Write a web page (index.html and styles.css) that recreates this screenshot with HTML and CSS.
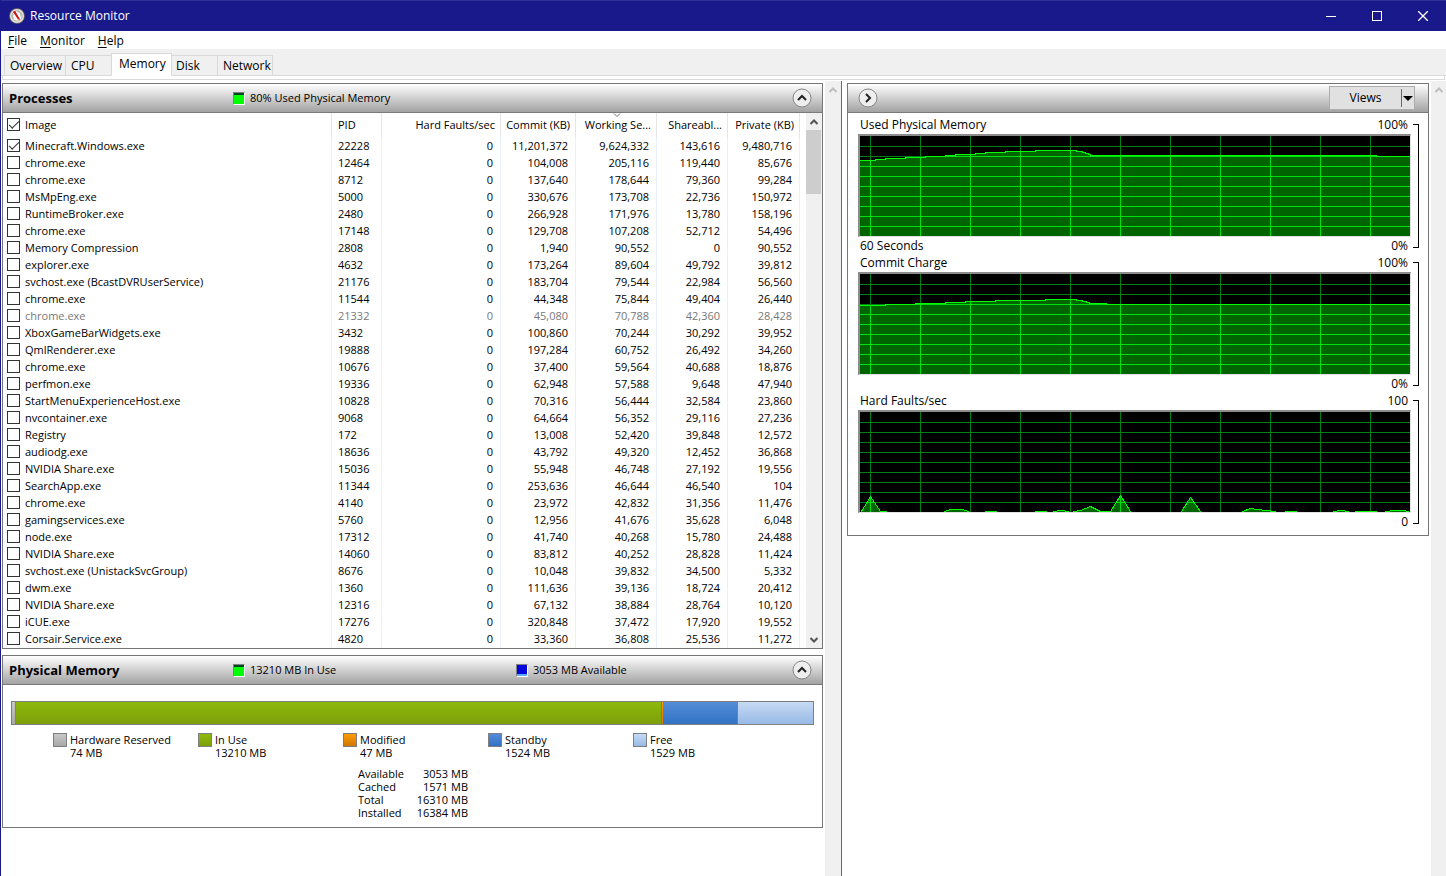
FILE: index.html
```html
<!DOCTYPE html>
<html lang="en">
<head>
<meta charset="utf-8">
<title>Resource Monitor</title>
<link rel="stylesheet" href="styles.css">
</head>
<body>
<header class="titlebar">
  <svg class="app-icon" viewBox="0 0 16 16" aria-hidden="true">
    <circle cx="8" cy="8" r="7.8" fill="#77736e"/>
    <circle cx="8" cy="8" r="7" fill="#ece6dc"/>
    <circle cx="8" cy="8" r="5.2" fill="#fff" stroke="#b5afa5" stroke-width="1"/>
    <path d="M4.4 10.5A4.5 4.5 0 0 1 4.2 6M8.5 3.4a4.6 4.6 0 0 1 3.4 5" fill="none" stroke="#8a8f8a" stroke-width=".8"/>
    <path d="M3.8 3.6 6.2 3 11.2 11.8 9 11.6Z" fill="#d01010"/>
  </svg>
  <h1 class="titlebar-text">Resource Monitor</h1>
  <button class="win-btn" aria-label="Minimize"><svg viewBox="0 0 10 10"><path d="M0 5.5H10"/></svg></button>
  <button class="win-btn" aria-label="Maximize"><svg viewBox="0 0 10 10"><path d="M.5 .5H9.5V9.5H.5Z"/></svg></button>
  <button class="win-btn" aria-label="Close"><svg viewBox="0 0 10 10" class="smooth"><path d="M0 0 10 10M10 0 0 10"/></svg></button>
</header>
<nav class="menubar">
  <button><u>F</u>ile</button>
  <button><u>M</u>onitor</button>
  <button><u>H</u>elp</button>
</nav>
<div class="tabs" role="tablist">
  <button class="tab tab-overview" role="tab">Overview</button>
  <button class="tab tab-cpu" role="tab">CPU</button>
  <button class="tab tab-memory selected" role="tab" aria-selected="true">Memory</button>
  <button class="tab tab-disk" role="tab">Disk</button>
  <button class="tab tab-network" role="tab">Network</button>
</div>
<div class="tab-edge"></div>
<main class="panes">
  <section class="pane pane-left">
    <div class="pane-content">
      <section class="panel">
        <header class="panel-head">
          <h2>Processes</h2>
          <span class="meter"><i class="meter-icon green"></i>80% Used Physical Memory</span>
          <button class="round" aria-label="Collapse"><svg viewBox="0 0 20 20"><circle cx="10" cy="10" r="9"/><path d="M6 12 10 8 14 12"/></svg></button>
        </header>
        <div class="list">
          <table class="processes">
            <colgroup><col><col class="c-pid"><col class="c-faults"><col class="c-commit"><col class="c-working"><col class="c-share"><col class="c-private"></colgroup>
            <thead>
              <tr>
                <th class="text"><label><input type="checkbox" checked>Image</label></th>
                <th class="text">PID</th>
                <th>Hard Faults/sec</th>
                <th>Commit (KB)</th>
                <th class="sorted">Working Se...<svg viewBox="0 0 8 5"><path d="M1 .5 4 3.5 7 .5"/></svg></th>
                <th>Shareabl...</th>
                <th>Private (KB)</th>
              </tr>
            </thead>
            <tbody id="rows"></tbody>
          </table>
          <div class="scrollbar">
            <button aria-label="Scroll up"><svg viewBox="0 0 8 6"><path d="M.5 5 4 1.5 7.5 5"/></svg></button>
            <div class="track"><div class="thumb"></div></div>
            <button aria-label="Scroll down"><svg viewBox="0 0 8 6"><path d="M.5 1 4 4.5 7.5 1"/></svg></button>
          </div>
        </div>
      </section>
      <section class="panel">
        <header class="panel-head">
          <h2>Physical Memory</h2>
          <span class="meter"><i class="meter-icon green"></i>13210 MB In Use</span>
          <span class="meter"><i class="meter-icon blue"></i>3053 MB Available</span>
          <button class="round" aria-label="Collapse"><svg viewBox="0 0 20 20"><circle cx="10" cy="10" r="9"/><path d="M6 12 10 8 14 12"/></svg></button>
        </header>
        <div class="memory">
          <div class="bar">
            <div class="reserved"></div>
            <div class="inuse" style="flex-grow:13210"></div>
            <div class="modified"></div>
            <div class="standby" style="flex-grow:1524"></div>
            <div class="free" style="flex-grow:1529"></div>
          </div>
          <ul class="legend">
            <li><i class="reserved"></i><span>Hardware Reserved<br>74 MB</span></li>
            <li><i class="inuse"></i><span>In Use<br>13210 MB</span></li>
            <li><i class="modified"></i><span>Modified<br>47 MB</span></li>
            <li><i class="standby"></i><span>Standby<br>1524 MB</span></li>
            <li><i class="free"></i><span>Free<br>1529 MB</span></li>
          </ul>
          <dl class="totals">
            <dt>Available</dt><dd>3053 MB</dd>
            <dt>Cached</dt><dd>1571 MB</dd>
            <dt>Total</dt><dd>16310 MB</dd>
            <dt>Installed</dt><dd>16384 MB</dd>
          </dl>
        </div>
      </section>
    </div>
    <div class="pane-scroll"><svg viewBox="0 0 8 6"><path d="M.5 5 4 1.5 7.5 5"/></svg></div>
  </section>
  <section class="pane pane-right">
    <div class="pane-content">
      <section class="panel">
        <header class="panel-head">
          <button class="round" aria-label="Hide graphs"><svg viewBox="0 0 20 20"><circle cx="10" cy="10" r="9"/><path d="M8 6 12 10 8 14"/></svg></button>
          <button class="views"><span>Views</span><i></i></button>
        </header>
        <div class="charts" id="charts"></div>
      </section>
    </div>
    <div class="pane-scroll"><svg viewBox="0 0 8 6"><path d="M.5 5 4 1.5 7.5 5"/></svg></div>
  </section>
</main>
<script src="app.js"></script>
</body>
</html>
```
FILE: styles.css
```css
* { box-sizing: border-box; }
html { height: 100%; }
body {
  margin: 0; min-height: 100%; display: flex; flex-direction: column;
  border-left: 1px solid #19198b; background: #fff; color: #000;
  font: 11px/13px "Open Sans", "Noto Sans", sans-serif;
}
button { font: inherit; color: inherit; border: 0; background: none; padding: 0; margin: 0; }
h1, h2, ul, dl, dd { margin: 0; padding: 0; font: inherit; }
svg { display: block; fill: none; stroke: currentColor; }

.titlebar { display: flex; height: 31px; align-items: center; background: #19198b; border-top: 1px solid #30309a; color: #fff; }
.app-icon { width: 16px; height: 16px; margin-left: 8px; stroke: none; }
.titlebar-text { flex: 1; margin-left: 5px; font-size: 12px; line-height: 16px; }
.win-btn { width: 46px; height: 30px; display: grid; place-items: center; }
.win-btn svg { width: 10px; height: 10px; shape-rendering: crispEdges; }
.win-btn svg.smooth { shape-rendering: auto; stroke-width: 1.3; }

.menubar { display: flex; height: 18px; padding-left: 7px; gap: 13px; font-size: 12px; line-height: 20px; }
.menubar u { text-underline-offset: 2px; }

.tabs { display: flex; align-items: flex-end; height: 27px; padding-left: 3px; background: #f0f0f0; border-bottom: 1px solid #d9d9d9; font-size: 12px; line-height: 16px; }
.tab { height: 21px; margin-bottom: -1px; padding: 0 0 0 5px; border: 1px solid #d9d9d9; border-right: 0; text-align: left; }
.tab.selected { height: 23px; background: #fff; border-right: 1px solid #d9d9d9; border-bottom-color: #fff; padding: 0 0 1px 7px; }
.tab:last-child { border-right: 1px solid #d9d9d9; }
.tab-overview { width: 61px; }
.tab-cpu { width: 46px; }
.tab-memory { width: 61px; }
.tab-disk { width: 45px; padding-left: 4px; border-left: 0; }
.tab-network { width: 56px; }
.tab-edge { height: 4px; margin: 0 1px 0 1px; border: 1px solid #d9d9d9; border-top: 0; }

.panes { flex: 1; display: grid; grid-template-columns: 841fr 604fr; margin-top: 1px; }
.pane { display: flex; min-width: 0; gap: 2px; }
.pane-left { padding-left: 1px; border-right: 1px solid #696969; }
.pane-right { padding-left: 5px; }
.pane-content { flex: 1; min-width: 0; padding-top: 2px; display: flex; flex-direction: column; gap: 6px; }
.pane-scroll { width: 16px; background: #f0f0f0; color: #bfbfbf; padding: 6px 4px; }
.pane-scroll svg { width: 8px; height: 6px; stroke-width: 2; }
.pane-right .pane-scroll { width: 15px; }

.panel { border: 1px solid #767676; }
.panel-head { display: flex; align-items: center; height: 29px; padding: 0 10px 0 6px; background: linear-gradient(#fff, #a2a2a2); border-bottom: 1px solid #7a7a7a; }
.panel-head h2 { flex: none; width: 224px; font-size: 13px; line-height: 18px; font-weight: 700; }
.meter { flex: none; width: 283px; display: flex; align-items: flex-start; gap: 5px; line-height: 12px; }
.meter + .meter { width: auto; }
.meter-icon { width: 12px; height: 13px; border: 1px solid; border-color: #808080 #fff #fff #808080; }
.meter-icon.green { background: linear-gradient(#042 2px, #0f0 2px); }
.meter-icon.blue { background: repeating-linear-gradient(90deg, #0000ff00 0 1px, #0000a060 1px 2px) 0 0 / 100% 9px no-repeat, linear-gradient(#00f 9px, #5aaaff 9px); }
.round { width: 20px; height: 20px; margin-left: auto; flex: none; }
.round svg { width: 20px; height: 20px; }
.round circle { fill: #eee; stroke: #858585; }
.round path { stroke: #222; stroke-width: 2; }

.list { display: flex; gap: 6px; }
.processes { flex: 1; min-width: 0; table-layout: fixed; border-collapse: separate; border-spacing: 0; }
.c-pid { width: 50px; } .c-faults { width: 119px; } .c-commit { width: 75px; }
.c-working { width: 81px; } .c-share { width: 71px; } .c-private { width: 72px; }
th, td { font-weight: 400; text-align: right; white-space: nowrap; overflow: hidden; }
th { height: 25px; padding: 0 5px 2px 0; border-right: 1px solid #e5e5e5; position: relative; }
th:nth-child(n+4) { padding-left: 4px; }
td { height: 17px; padding: 0 7px 2px 0; border-right: 1px solid #e9f2fc; }
.text { text-align: left; padding-left: 6px; }
.text:first-child { padding: 0 0 0 4px; }
label { display: flex; align-items: flex-start; gap: 5px; height: 17px; line-height: 15px; }
input[type=checkbox] { appearance: none; width: 13px; height: 13px; margin: 1px 0 0; border: 1px solid #333; background: #fff; display: grid; place-items: center; }
input[type=checkbox]:checked::before { content: ""; width: 9px; height: 4px; margin-top: -3px; border: solid #333; border-width: 0 0 1px 1px; transform: rotate(-45deg); }
tr.ended { color: #777; }
.sorted svg { position: absolute; top: 0; left: 37px; width: 8px; height: 5px; color: #777; }
.scrollbar { width: 16px; display: flex; flex-direction: column; background: #f0f0f0; color: #555; }
.scrollbar button { height: 17px; display: grid; place-items: center; }
.scrollbar button svg { width: 8px; height: 6px; stroke-width: 2; }
.track { flex: 1; }
.thumb { height: 64px; margin-right: 1px; background: #cdcdcd; }

.memory { padding: 16px 8px 8px; }
.bar { display: flex; height: 24px; border: 1px solid #7f7f7f; }
.bar > div { flex: 0 0 0px; min-width: 0; }
.bar > div + div { border-left: 1px solid #808080; }
.bar > .reserved { flex-basis: 3px; }
.bar > .modified { flex: 0 0 2px; border-left-color: #a07030; }
.bar > .modified + div { border-left: 0; }
.reserved { background: linear-gradient(#c8c8c8, #a8a8a8); }
.inuse { background: linear-gradient(#8eb90c, #7c9f0a); }
.modified { background: linear-gradient(#ff9c06, #cf7600); }
.standby { background: linear-gradient(#548dd8, #3272c4); }
.free { background: linear-gradient(#c6daf3, #98bae6); }
.legend { display: flex; list-style: none; margin: 8px 0 0 42px; }
.legend li { display: flex; width: 145px; gap: 3px; line-height: 13px; }
.legend i { width: 14px; height: 14px; border: 1px solid #7f7f7f; }
.totals { display: grid; grid-template-columns: 50px 60px; margin: 8px 0 0 347px; line-height: 13px; }
.totals dd { text-align: right; }

.pane-right .panel-head { justify-content: space-between; padding: 0 13px 0 10px; }
.pane-right .round { margin-left: 0; }
.views { display: flex; align-items: center; width: 86px; height: 24px; border: 1px solid #adadad; background: #e1e1e1; font-size: 12px; }
.views span { flex: 1; height: 18px; line-height: 18px; border-right: 1px solid #696969; }
.views i { margin: 0 1px; border: 5px solid transparent; border-top-color: #000; border-bottom: 0; }
.charts { padding: 4px 9px 4px 10px; font-size: 12px; }
.chart { display: grid; grid-template-columns: 1fr 6px; column-gap: 2px; grid-template-rows: 17px 103px 18px; line-height: 17px; }
.caption { display: flex; justify-content: space-between; padding: 0 3px 0 2px; }
.caption:first-child { line-height: 15px; }
.plot { grid-column: 1; border: 2px solid #696969; border-color: #8c8c8c #e3e3e3 #e3e3e3 #8c8c8c; border-right-width: 1px; border-bottom-width: 1px; }
.plot svg { width: 100%; height: 100px; background: #000; shape-rendering: crispEdges; stroke: none; }
.bracket { grid-column: 2; grid-row: 1 / 4; margin: 7px 0; border: 1px solid #000; border-left: 0; }
.area { fill: #006400; }
.line { fill: none; stroke: #00ff00; stroke-width: 1; }
.grid-dim { fill: none; stroke: #007f14; }
.grid-lit { fill: none; stroke: #00e010; }
```
FILE: app.js
```js
const processes = `Minecraft.Windows.exe|22228|11,201,372|9,624,332|143,616|9,480,716
chrome.exe|12464|104,008|205,116|119,440|85,676
chrome.exe|8712|137,640|178,644|79,360|99,284
MsMpEng.exe|5000|330,676|173,708|22,736|150,972
RuntimeBroker.exe|2480|266,928|171,976|13,780|158,196
chrome.exe|17148|129,708|107,208|52,712|54,496
Memory Compression|2808|1,940|90,552|0|90,552
explorer.exe|4632|173,264|89,604|49,792|39,812
svchost.exe (BcastDVRUserService)|21176|183,704|79,544|22,984|56,560
chrome.exe|11544|44,348|75,844|49,404|26,440
chrome.exe|21332|45,080|70,788|42,360|28,428
XboxGameBarWidgets.exe|3432|100,860|70,244|30,292|39,952
QmlRenderer.exe|19888|197,284|60,752|26,492|34,260
chrome.exe|10676|37,400|59,564|40,688|18,876
perfmon.exe|19336|62,948|57,588|9,648|47,940
StartMenuExperienceHost.exe|10828|70,316|56,444|32,584|23,860
nvcontainer.exe|9068|64,664|56,352|29,116|27,236
Registry|172|13,008|52,420|39,848|12,572
audiodg.exe|18636|43,792|49,320|12,452|36,868
NVIDIA Share.exe|15036|55,948|46,748|27,192|19,556
SearchApp.exe|11344|253,636|46,644|46,540|104
chrome.exe|4140|23,972|42,832|31,356|11,476
gamingservices.exe|5760|12,956|41,676|35,628|6,048
node.exe|17312|41,740|40,268|15,780|24,488
NVIDIA Share.exe|14060|83,812|40,252|28,828|11,424
svchost.exe (UnistackSvcGroup)|8676|10,048|39,832|34,500|5,332
dwm.exe|1360|111,636|39,136|18,724|20,412
NVIDIA Share.exe|12316|67,132|38,884|28,764|10,120
iCUE.exe|17276|320,848|37,472|17,920|19,552
Corsair.Service.exe|4820|33,360|36,808|25,536|11,272`.split("\n").map(line => line.split("|"));

document.getElementById("rows").innerHTML = processes.map(([name, pid, ...sizes], i) => `
  <tr${pid === "21332" ? ' class="ended"' : ""}>
    <td class="text"><label><input type="checkbox"${i === 0 ? " checked" : ""}>${name}</label></td>
    <td class="text">${pid}</td><td>0</td>${sizes.map(s => `<td>${s}</td>`).join("")}
  </tr>`).join("");

let gridPath = "";
for (let x = 10; x < 550; x += 50) gridPath += `M${x}.5 0V100`;
for (let y = 10; y < 100; y += 10) gridPath += `M0 ${y}.5H550`;

const charts = [
  { title: "Used Physical Memory", max: "100%", min: "0%", span: "60 Seconds",
    steps: [[0,24],[15,23],[25,22],[45,21],[65,20],[85,19],[95,18],[115,17],[125,16],[145,15],[175,14],[216,15],[222,16],[225,17],[228,18],[230,19],[516,20]] },
  { title: "Commit Charge", max: "100%", min: "0%", span: "",
    steps: [[0,31],[25,30],[55,29],[85,28],[105,27],[135,26],[185,25],[216,26],[222,27],[226,28],[229,29],[246,30]] },
  { title: "Hard Faults/sec", max: "100", min: "0", span: "",
    points: [[0,100],[1,99],[10,84],[20,99],[26,99],[27,101],[81,101],[84,99],[90,97],[102,97],[108,99],[109,101],[124,101],[125,99],[136,99],[137,101],[174,101],[175,99],[186,99],[187,101],[192,101],[193,99],[200,98],[208,99],[209,101],[212,101],[213,99],[220,98],[230,94],[240,99],[250,99],[260,83],[270,99],[271,101],[320,101],[321,99],[330,85],[340,99],[341,101],[380,101],[382,99],[390,96],[405,98],[415,99],[416,101],[424,101],[425,99],[436,99],[437,101],[472,101],[473,99],[480,98],[488,99],[489,101],[494,101],[495,99],[516,99],[517,101],[524,101],[525,99],[535,98],[543,98],[548,99],[549,101]] }
];

document.getElementById("charts").innerHTML = charts.map((c, i) => {
  const curve = c.steps
    ? c.steps.map(([x, y], n) => n ? `H${x}V${y}.5` : `M${x} ${y}.5`).join("") + "H550"
    : "M" + c.points.map(([x, y]) => `${x}.5 ${y}.5`).join("L");
  const area = curve + "V101H0Z";
  return `<div class="chart">
    <div class="caption"><span>${c.title}</span><span>${c.max}</span></div>
    <div class="plot"><svg viewBox="0 0 550 100" preserveAspectRatio="none">
      <clipPath id="clip${i}"><path d="${area}"/></clipPath>
      <path class="grid-dim" d="${gridPath}"/>
      <path class="area" d="${area}"/>
      <path class="grid-lit" clip-path="url(#clip${i})" d="${gridPath}"/>
      <path class="line" d="${curve}"/>
    </svg></div>
    <div class="caption"><span>${c.span}</span><span>${c.min}</span></div>
    <div class="bracket"></div>
  </div>`;
}).join("");
```
